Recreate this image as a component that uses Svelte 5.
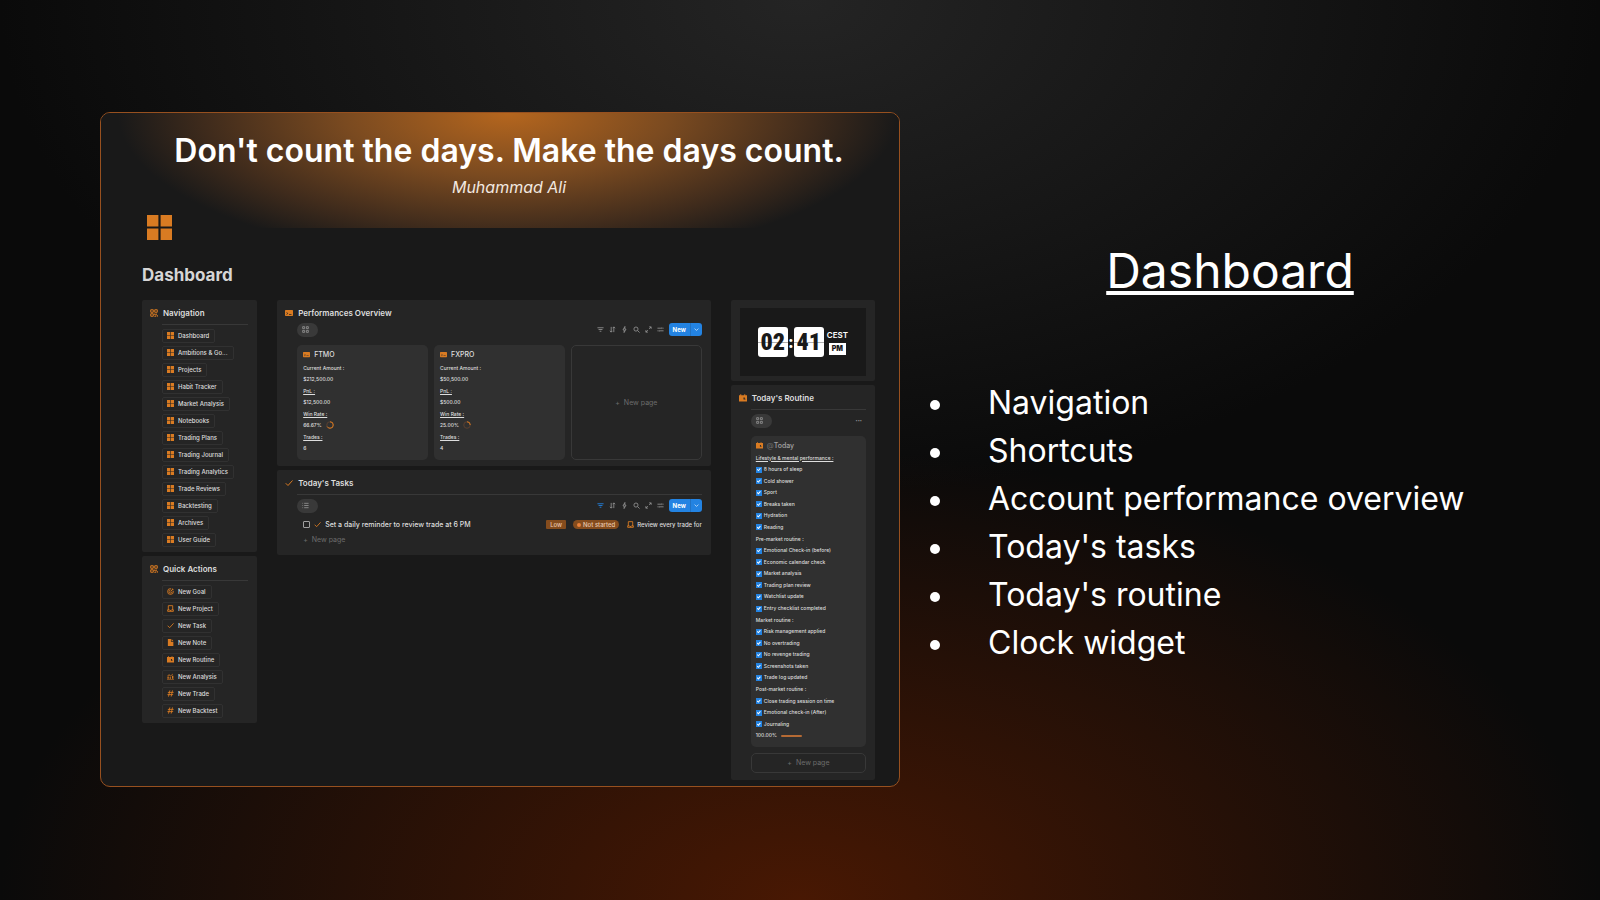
<script lang="ts">
  type IconName = keyof typeof icons;

  const icons = {
    grid: { solid: true, d: 'M0 0h7.3v7.3H0zM8.7 0H16v7.3H8.7zM0 8.7h7.3V16H0zM8.7 8.7H16V16H8.7z' },
    qr: { solid: false, d: 'M1.5 1.5h5v5h-5zM9.5 1.5h5v5h-5zM1.5 9.5h5v5h-5zM9.5 9v3h3V9M9 15h2.500M14.500 12v3.500' },
    card: { solid: true, d: 'M1.5 2h13A1.5 1.5 0 0 1 16 3.5v9a1.5 1.5 0 0 1-1.5 1.5h-13A1.5 1.5 0 0 1 0 12.5v-9A1.5 1.5 0 0 1 1.5 2zM3 6v1.500L5 9l-2 1.500V12l3.500-3zM8 10v1.500h5V10z' },
    check: { solid: false, d: 'M1.5 8.5l4.5 4.5L15 3' },
    target: { solid: false, d: 'M14.5 7a6.600 6.600 0 1 1-5.500-5.500M11.500 8a3.500 3.500 0 1 1-3.500-3.500M8 8l5-5M12 1v3h3' },
    inbox: { solid: false, d: 'M3 1.5h10v10M3 1.5v10M1.5 11v3.500h13V11h-4l-1 1.500h-3L5.500 11z' },
    note: { solid: true, d: 'M2 0h7v6h5.5v10H2zM10.5 0l4 4.500h-4z' },
    calendar: { solid: true, d: 'M0 2.5h2.5V.500h2v2h6v-2h2v2H16V15H0zM9 7v4h4V9.500h-1.500V7z' },
    chart: { solid: true, d: 'M0 14h16v1.500H0zM1 8h3v5H1zM6 9.500h3V13H6zM11.500 6h3v7h-3zM1 5.500L5 3l3 3 5-4.500 1 1L8 8 5 5 1.500 7z' },
    hash: { solid: false, d: 'M6.5 1l-3 14M12.5 1l-3 14M2 5.500h13M1 10.500h13' },
    gallery: { solid: false, d: 'M1.5 1.5H6V6H1.500zM10 1.500h4.500V6H10zM1.500 10H6v4.500H1.500zM10 10h4.500v4.500H10z' },
    list: { solid: false, d: 'M1 3h1.500M5 3h10M1 8h1.500M5 8h10M1 13h1.500M5 13h10' },
    filter: { solid: false, d: 'M1 4h14M3.500 8h9M6 12h4' },
    sort: { solid: false, d: 'M5 2v12M2 11l3 3 3-3M11 14V2M8.500 5L11 2l3 3' },
    bolt: { solid: false, d: 'M9 1L4.500 9h3L7 15l4.500-8h-3z' },
    search: { solid: false, d: 'M11.500 7a4.700 4.700 0 1 1-9.400 0 4.700 4.700 0 0 1 9.400 0zM10.500 10.500L15 15' },
    expand: { solid: false, d: 'M9.500 2H14v4.500M14 2L9.500 6.500M6.500 14H2V9.500M2 14l4.500-4.500' },
    settings: { solid: false, d: 'M1 5h8M13 5h2M11 3v4M1 11h2M7 11h8M5 9v4' },
    chevron: { solid: false, d: 'M2 5l6 6 6-6' },
  };

  const navigation = [
    'Dashboard',
    'Ambitions & Go...',
    'Projects',
    'Habit Tracker',
    'Market Analysis',
    'Notebooks',
    'Trading Plans',
    'Trading Journal',
    'Trading Analytics',
    'Trade Reviews',
    'Backtesting',
    'Archives',
    'User Guide',
  ];

  const quickActions: { label: string; icon: IconName }[] = [
    { label: 'New Goal', icon: 'target' },
    { label: 'New Project', icon: 'inbox' },
    { label: 'New Task', icon: 'check' },
    { label: 'New Note', icon: 'note' },
    { label: 'New Routine', icon: 'calendar' },
    { label: 'New Analysis', icon: 'chart' },
    { label: 'New Trade', icon: 'hash' },
    { label: 'New Backtest', icon: 'hash' },
  ];

  const accounts = [
    { name: 'FTMO', amount: '$212,500.00', pnl: '$12,500.00', winRate: 66.67, trades: 6 },
    { name: 'FXPRO', amount: '$50,500.00', pnl: '$500.00', winRate: 25, trades: 4 },
  ];

  const routine = [
    {
      title: 'Lifestyle & mental performance :',
      underlined: true,
      items: ['8 hours of sleep', 'Cold shower', 'Sport', 'Breaks taken', 'Hydration', 'Reading'],
    },
    {
      title: 'Pre-market routine :',
      items: [
        'Emotional Check-in (before)',
        'Economic calendar check',
        'Market analysis',
        'Trading plan review',
        'Watchlist update',
        'Entry checklist completed',
      ],
    },
    {
      title: 'Market routine :',
      items: ['Risk management applied', 'No overtrading', 'No revenge trading', 'Screenshots taken', 'Trade log updated'],
    },
    {
      title: 'Post-market routine :',
      items: ['Close trading session on time', 'Emotional check-in (After)', 'Journaling'],
    },
  ];

  const features = [
    'Navigation',
    'Shortcuts',
    'Account performance overview',
    "Today's tasks",
    "Today's routine",
    'Clock widget',
  ];

  const tools: IconName[] = ['filter', 'sort', 'bolt', 'search', 'expand', 'settings'];
</script>

{#snippet icon(name: IconName)}
  <svg class={['icon', icons[name].solid && 'solid']} viewBox="0 0 16 16" aria-hidden="true">
    <path d={icons[name].d} />
  </svg>
{/snippet}

{#snippet heading(title: string, name: IconName)}
  <h3 class="panel-title">{@render icon(name)}{title}</h3>
{/snippet}

{#snippet toolbar(view: IconName, filtered: boolean)}
  <div class="toolbar">
    <button class="view" aria-label="View">{@render icon(view)}</button>
    <div class="tools">
      {#each tools as tool}
        <button class={['tool', filtered && tool === 'filter' && 'active']} aria-label={tool}>
          {@render icon(tool)}
        </button>
      {/each}
      <div class="new">
        <button>New</button>
        <button class="more" aria-label="More options">{@render icon('chevron')}</button>
      </div>
    </div>
  </div>
{/snippet}

<main>
  <section class="window">
    <header class="banner">
      <p class="quote">Don't count the days. Make the days count.</p>
      <p class="author">Muhammad Ali</p>
    </header>

    <div class="body">
      <div class="page-icon">{@render icon('grid')}</div>
      <h2 class="page-title">Dashboard</h2>

      <div class="columns">
        <div class="column">
          <nav class="panel">
            {@render heading('Navigation', 'qr')}
            <div class="content ruled links">
              {#each navigation as label}
                <a class="chip" href="#page">{@render icon('grid')}{label}</a>
              {/each}
            </div>
          </nav>
          <section class="panel">
            {@render heading('Quick Actions', 'qr')}
            <div class="content ruled links">
              {#each quickActions as action}
                <button class="chip">{@render icon(action.icon)}{action.label}</button>
              {/each}
            </div>
          </section>
        </div>

        <div class="column">
          <section class="panel">
            {@render heading('Performances Overview', 'card')}
            <div class="content">
              {@render toolbar('gallery', false)}
              <div class="accounts">
                {#each accounts as account}
                  <article class="tile">
                    <h4 class="tile-title">{@render icon('card')}{account.name}</h4>
                    <dl>
                      <dt class="plain">Current Amount :</dt>
                      <dd>{account.amount}</dd>
                      <dt>PnL :</dt>
                      <dd>{account.pnl}</dd>
                      <dt>Win Rate :</dt>
                      <dd class="rate">
                        {account.winRate.toFixed(2)}%
                        <svg class="ring" viewBox="0 0 16 16" aria-hidden="true">
                          <circle cx="8" cy="8" r="6.5" />
                          <circle class="value" cx="8" cy="8" r="6.5" pathLength="100" stroke-dasharray="{account.winRate} 100" />
                        </svg>
                      </dd>
                      <dt>Trades :</dt>
                      <dd>{account.trades}</dd>
                    </dl>
                  </article>
                {/each}
                <button class="add outlined"><span>+</span>New page</button>
              </div>
            </div>
          </section>

          <section class="panel">
            {@render heading("Today's Tasks", 'check')}
            <div class="content ruled">
              {@render toolbar('list', true)}
              <div class="task">
                <label>
                  <input type="checkbox" />
                  {@render icon('check')}
                  Set a daily reminder to review trade at 6 PM
                </label>
                <span class="tag">Low</span>
                <span class="tag status">Not started</span>
                <a class="project" href="#project">{@render icon('inbox')}Review every trade for</a>
              </div>
              <button class="add row"><span>+</span>New page</button>
            </div>
          </section>
        </div>

        <div class="column">
          <section class="panel clock-panel">
            <div class="clock">
              <span class="flip">02</span>
              <span class="colon">:</span>
              <span class="flip">41</span>
              <div class="zone">
                <span>CEST</span>
                <span class="meridiem">PM</span>
              </div>
            </div>
          </section>

          <section class="panel grow">
            {@render heading("Today's Routine", 'calendar')}
            <div class="content ruled">
              <div class="toolbar">
                <button class="view" aria-label="View">{@render icon('gallery')}</button>
                <button class="dots" aria-label="More">•••</button>
              </div>
              <article class="tile routine">
                <h4 class="tile-title today">{@render icon('calendar')}<span>@</span>Today</h4>
                <div class="checks">
                  {#each routine as group}
                    <p class={{ underlined: group.underlined }}>{group.title}</p>
                    {#each group.items as item}
                      <label><input type="checkbox" checked />{item}</label>
                    {/each}
                  {/each}
                  <p class="total">100.00% <span class="bar"></span></p>
                </div>
              </article>
              <button class="add outlined"><span>+</span>New page</button>
            </div>
          </section>
        </div>
      </div>
    </div>
  </section>

  <section class="summary">
    <h1>Dashboard</h1>
    <ul>
      {#each features as feature}
        <li>{feature}</li>
      {/each}
    </ul>
  </section>
</main>

<style>
  :global(body) {
    background: #0a0a0a;
  }

  main {
    --orange: #d97b22;
    --blue: #2383e2;
    --line: #383838;
    box-sizing: border-box;
    min-height: 100vh;
    display: grid;
    grid-template-columns: 50vw 1fr;
    gap: 30px;
    align-items: center;
    padding: 0 70px 2px 100px;
    font-family: Inter, 'Liberation Sans', sans-serif;
    color: #fff;
    background:
      radial-gradient(50% 50% at 50% 100%, #481803, transparent),
      radial-gradient(50% 55% at 50% 0, #242424, transparent),
      #0a0a0a;
  }

  h1, h2, h3, h4, p, ul, dl, dd {
    margin: 0;
    padding: 0;
  }

  button, input {
    margin: 0;
    padding: 0;
    border: 0;
    font: inherit;
    color: inherit;
    background: none;
  }

  a {
    color: inherit;
    text-decoration: none;
  }

  .icon {
    flex: none;
    width: 7px;
    height: 7px;
    fill: none;
    stroke: var(--orange);
    stroke-width: 2;
  }

  .icon.solid {
    fill: var(--orange);
    fill-rule: evenodd;
    stroke: none;
  }

  .window {
    box-sizing: border-box;
    display: flex;
    flex-direction: column;
    aspect-ratio: 32 / 27;
    overflow: hidden;
    border: 1px solid #97501f;
    border-radius: 10px;
    background: #191919;
  }

  .banner {
    box-sizing: border-box;
    height: 115px;
    padding: 16px 0 0 18px;
    text-align: center;
    background: radial-gradient(390px 150px at 51% 0, #b5661e, #7a4a20 42%, #3f2b1c 78%, #191919);
  }

  .quote {
    font-size: 32px;
    font-weight: 600;
    line-height: 44px;
  }

  .author {
    font-size: 16px;
    font-style: italic;
    line-height: 28px;
    color: #f3e9e0;
  }

  .body {
    flex: 1;
    display: flex;
    flex-direction: column;
    padding: 0 24px 6px 41px;
    font-size: 6px;
    font-weight: 500;
    color: #dedede;
  }

  .page-icon {
    height: 25px;
    margin: -13px 0 0 5px;
  }

  .page-icon .icon {
    width: 25px;
    height: 25px;
  }

  .page-title {
    margin: 24px 0 14px;
    font-size: 17px;
    font-weight: 700;
    line-height: 22px;
    color: #d6d6d6;
  }

  .columns {
    flex: 1;
    display: grid;
    grid-template-columns: 115fr 433fr 144fr;
    gap: 20px;
  }

  .column {
    min-width: 0;
    display: flex;
    flex-direction: column;
    gap: 4px;
  }

  .panel {
    display: flex;
    flex-direction: column;
    padding: 5px 9px 5px 8px;
    border-radius: 2px;
    background: #252525;
  }

  .grow, .grow .content {
    flex: 1;
  }

  .panel.grow {
    padding-bottom: 7px;
  }

  .panel-title {
    display: flex;
    align-items: center;
    gap: 5px;
    font-size: 8px;
    font-weight: 600;
    line-height: 16px;
  }

  .panel-title .icon {
    width: 8px;
    height: 8px;
  }

  .content {
    display: flex;
    flex-direction: column;
    margin-left: 12px;
    padding-top: 2px;
  }

  .ruled {
    margin-top: 3px;
    padding-top: 4px;
    border-top: 1px solid var(--line);
  }

  .links {
    align-items: flex-start;
    gap: 3px;
  }

  .chip {
    box-sizing: border-box;
    display: flex;
    align-items: center;
    gap: 4px;
    height: 14px;
    padding: 0 5px 0 4px;
    border: 1px solid #313131;
    border-radius: 2px;
    white-space: nowrap;
  }

  .toolbar {
    display: flex;
    align-items: center;
    justify-content: space-between;
    height: 14px;
    margin-bottom: 8px;
  }

  .view {
    width: 21px;
    height: 14px;
    padding-left: 5px;
    border-radius: 7px;
    line-height: 0;
    text-align: left;
    background: #393939;
  }

  .view .icon, .tool .icon {
    stroke: #909090;
  }

  .tools {
    display: flex;
    align-items: center;
    gap: 5px;
  }

  .tool {
    width: 7px;
    height: 7px;
    line-height: 0;
  }

  .tool.active .icon {
    stroke: var(--blue);
  }

  .new {
    display: flex;
    height: 13px;
    border-radius: 3px;
    font-weight: 700;
    color: #fff;
    background: var(--blue);
  }

  .new button {
    padding: 0 4px;
  }

  .new .more {
    display: flex;
    align-items: center;
    padding: 0 3px;
    border-left: 1px solid #2272c2;
  }

  .new .icon {
    width: 5px;
    height: 5px;
    stroke: #fff;
  }

  .accounts {
    display: grid;
    grid-template-columns: repeat(3, 1fr);
    gap: 6px;
    margin-bottom: 1px;
  }

  .tile {
    padding: 4px 6px 6px;
    border-radius: 5px;
    font-size: 5px;
    font-weight: 500;
    background: #303030;
  }

  .tile-title {
    display: flex;
    align-items: center;
    gap: 4px;
    margin-bottom: 1px;
    font-size: 7px;
    font-weight: 500;
    line-height: 12px;
  }

  dt {
    line-height: 12px;
    text-decoration: underline;
  }

  dt.plain {
    text-decoration: none;
  }

  dd {
    line-height: 11px;
  }

  .rate {
    display: flex;
    align-items: center;
    gap: 4px;
  }

  .ring {
    width: 8px;
    height: 8px;
    transform: rotate(-90deg);
    fill: none;
    stroke: #5a4030;
    stroke-width: 2;
  }

  .ring .value {
    stroke: var(--orange);
  }

  .add {
    display: flex;
    align-items: center;
    justify-content: center;
    gap: 4px;
    font-size: 7px;
    font-weight: 400;
    color: #6c6c6c;
  }

  .outlined {
    min-height: 20px;
    border: 1px solid var(--line);
    border-radius: 5px;
  }

  .add.row {
    justify-content: flex-start;
    height: 14px;
    margin: 1px 0 3px;
    padding-left: 6px;
  }

  .task {
    display: flex;
    align-items: center;
    height: 14px;
    margin-top: -3px;
    padding-left: 6px;
    white-space: nowrap;
  }

  .task label {
    flex: 1;
    display: flex;
    align-items: center;
    gap: 4px;
    font-size: 7px;
  }

  .task input {
    appearance: none;
    width: 7px;
    height: 7px;
    border: 1px solid #a0a0a0;
    border-radius: 1px;
  }

  .tag {
    padding: 0 4px;
    border-radius: 1px;
    line-height: 9px;
    color: #e8c9b0;
    background: #854c1d;
  }

  .status {
    display: flex;
    align-items: center;
    gap: 2px;
    margin: 0 8px 0 7px;
    border-radius: 5px;
  }

  .status::before {
    content: '';
    width: 4px;
    height: 4px;
    border-radius: 50%;
    background: #e8813a;
  }

  .project {
    display: flex;
    align-items: center;
    gap: 3px;
  }

  .clock-panel {
    padding: 8px 9px 5px;
  }

  .clock {
    display: flex;
    align-items: center;
    justify-content: center;
    height: 68px;
    color: #fff;
    background: #191919;
  }

  .flip {
    width: 30px;
    border-radius: 3px;
    font-family: 'Liberation Sans Narrow', 'Roboto Condensed', Roboto, sans-serif;
    font-size: 24px;
    font-weight: 900;
    line-height: 30px;
    text-align: center;
    color: #191919;
    background: linear-gradient(#fff 15px, #b0b0b0 15px, #b0b0b0 16px, #fff 16px);
  }

  .colon {
    width: 6px;
    font-size: 16px;
    font-weight: 800;
    text-align: center;
  }

  .zone {
    display: flex;
    flex-direction: column;
    align-items: center;
    gap: 2px;
    margin-left: 3px;
    font-size: 8px;
    font-weight: 600;
    line-height: 12px;
  }

  .meridiem {
    padding: 0 3px;
    font-size: 7px;
    font-weight: 900;
    color: #191919;
    background: #fff;
  }

  .dots {
    padding-right: 4px;
    font-size: 4px;
    color: #909090;
  }

  .routine {
    flex: 1;
    display: flex;
    flex-direction: column;
    margin-bottom: 6px;
    padding: 4px 5px 5px;
  }

  .today {
    color: #a0a0a0;
  }

  .today span {
    margin-right: -4px;
    color: #6c6c6c;
  }

  .checks {
    flex: 1;
    display: flex;
    flex-direction: column;
    justify-content: space-between;
    line-height: 11px;
    white-space: nowrap;
  }

  .checks label {
    display: flex;
    align-items: center;
    gap: 2px;
  }

  .checks input {
    appearance: none;
    display: grid;
    place-items: center;
    width: 6px;
    height: 6px;
    background: var(--blue);
  }

  .checks input:checked::before {
    content: '';
    width: 4px;
    height: 4px;
    background: #fff;
    clip-path: polygon(0 50%, 18% 34%, 38% 58%, 82% 8%, 100% 24%, 40% 92%);
  }

  .underlined {
    text-decoration: underline;
  }

  .total {
    display: flex;
    align-items: center;
    gap: 4px;
  }

  .bar {
    width: 21px;
    height: 2px;
    border-radius: 1px;
    background: #b56a34;
  }

  .summary {
    padding-top: 10px;
  }

  h1 {
    margin-bottom: 78px;
    font-size: 48px;
    font-weight: 400;
    line-height: 60px;
    text-align: center;
    text-decoration: underline;
    text-decoration-thickness: 4px;
    text-decoration-skip-ink: none;
    text-underline-offset: 3px;
  }

  ul {
    list-style: none;
    font-size: 32px;
    line-height: 48px;
  }

  li {
    display: flex;
    align-items: center;
    gap: 48px;
  }

  li::before {
    content: '';
    flex: none;
    width: 10px;
    height: 10px;
    margin-top: 3px;
    border-radius: 50%;
    background: #fff;
  }
</style>
